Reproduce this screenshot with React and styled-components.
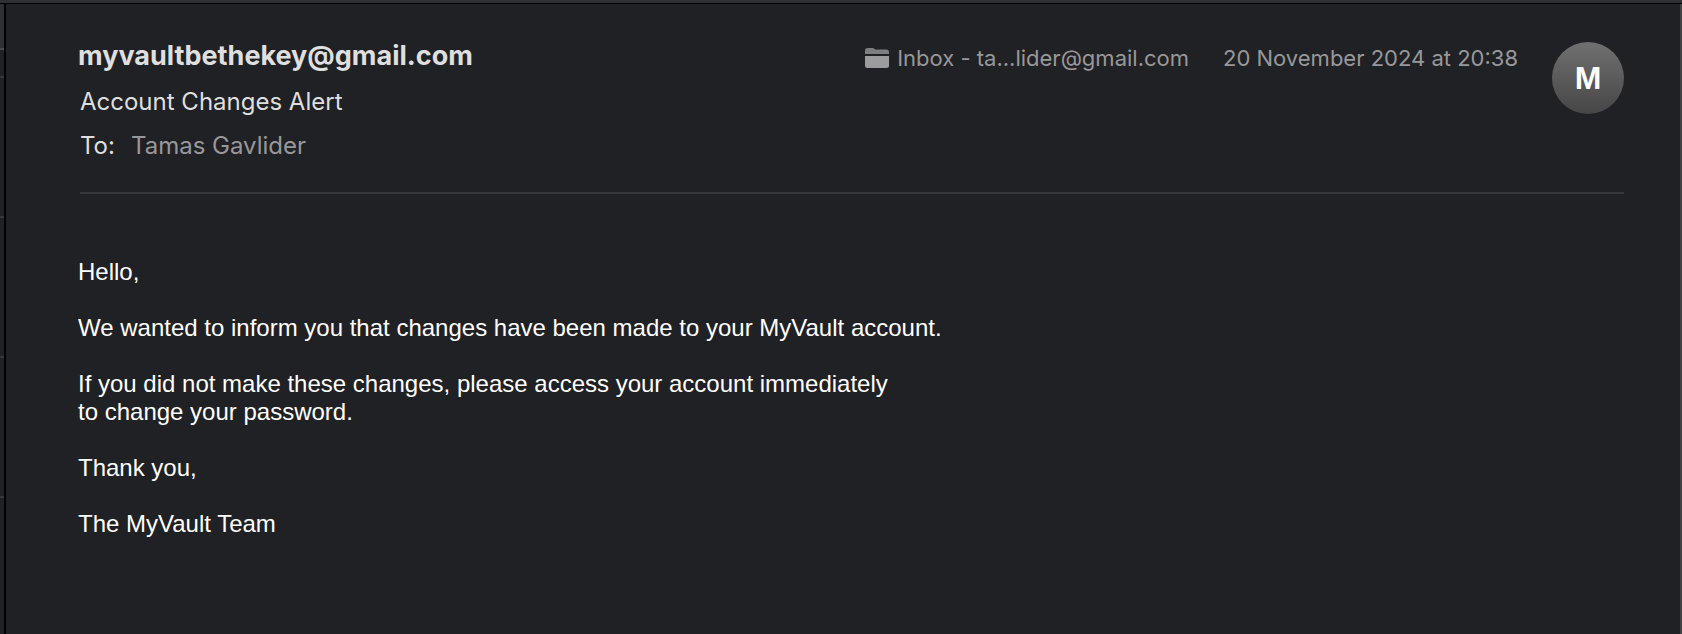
import React from "react";
import styled, { createGlobalStyle } from "styled-components";

const GlobalStyle = createGlobalStyle`
  * { box-sizing: border-box; }
  body {
    margin: 0;
    background: #202124;
    color: #dfdfdf;
    font-family: Inter, "Liberation Sans", sans-serif;
  }
  h1, h2, p { margin: 0; }
`;

const Window = styled.div`
  display: flex;
  flex-direction: column;
  min-height: 100vh;
`;

const ToolbarEdge = styled.div`
  height: 4px;
  background: #2f3033;
  border-bottom: 1px solid #000;
`;

const Panes = styled.div`
  display: flex;
  flex: 1;
`;

const ListPane = styled.aside`
  flex: none;
  width: 6px;
  border-right: 2px solid #000;
`;

const ListRow = styled.div`
  height: ${({ $height }) => $height}px;
  background: ${({ $header }) => ($header ? "#2c2f33" : "transparent")};
  border-bottom: 2px solid ${({ $header }) => ($header ? "#46484b" : "#36373a")};
`;

const Message = styled.main`
  flex: 1;
  min-width: 0;
  padding: 32px 56px 40px 72px;
  border-right: 2px solid #414244;
`;

const Header = styled.header`
  display: flex;
  align-items: flex-start;
  gap: 34px;
  margin-left: 2px;
  padding: 6px 0 30px;
  border-bottom: 2px solid #36373b;
`;

const Heading = styled.div`
  flex: 1;
  min-width: 0;
`;

const Sender = styled.h1`
  margin-left: -2px;
  font-size: 27px;
  font-weight: 700;
  line-height: 28px;
`;

const Subject = styled.h2`
  margin-top: 16px;
  font-size: 24px;
  font-weight: 400;
  line-height: 32px;
`;

const Recipient = styled.p`
  display: flex;
  gap: 16px;
  margin-top: 12px;
  font-size: 24px;
  line-height: 32px;
`;

const Muted = styled.span`
  color: #98989a;
`;

const Meta = styled.div`
  display: flex;
  align-items: center;
  color: #98989a;
  font-size: 22px;
  line-height: 32px;
  white-space: nowrap;
`;

const Mailbox = styled(Meta)`
  gap: 8px;
`;

const Avatar = styled.div`
  display: flex;
  align-items: center;
  justify-content: center;
  width: 72px;
  height: 72px;
  border-radius: 50%;
  background: linear-gradient(#707070, #464646);
  color: #fff;
`;

const Body = styled.article`
  display: flex;
  flex-direction: column;
  gap: 28px;
  padding-top: 64px;
  color: #fff;
  font-family: "Liberation Sans", Arial, sans-serif;
  font-size: 24px;
  line-height: 28px;
`;

const Initial = styled.span`
  font-family: "Liberation Sans", Arial, sans-serif;
  font-size: 32px;
  font-weight: 700;
  line-height: 36px;
`;

function FolderIcon() {
  return (
    <svg width="24" height="20" viewBox="0 0 24 20" aria-hidden="true">
      <path fill="#7f7f81" d="M0 6V2.5Q0 0 2.5 0H7.5Q8.6 0 9.4 .8L10.2 1.5H21.5Q24 1.5 24 4V6Z" />
      <path fill="#9c9c9e" d="M0 8H24V17.5Q24 20 21.5 20H2.5Q0 20 0 17.5Z" />
    </svg>
  );
}

const rows = [28, 140, 140, 140];

export default function App() {
  return (
    <Window>
      <GlobalStyle />
      <ToolbarEdge />
      <Panes>
        <ListPane>
          <ListRow $height={46} $header />
          {rows.map((height, i) => (
            <ListRow key={i} $height={height} />
          ))}
        </ListPane>
        <Message>
          <Header>
            <Heading>
              <Sender>myvaultbethekey@gmail.com</Sender>
              <Subject>Account Changes Alert</Subject>
              <Recipient>
                To: <Muted>Tamas Gavlider</Muted>
              </Recipient>
            </Heading>
            <Mailbox>
              <FolderIcon />
              Inbox - ta...lider@gmail.com
            </Mailbox>
            <Meta as="time" dateTime="2024-11-20T20:38">20 November 2024 at 20:38</Meta>
            <Avatar>
              <Initial>M</Initial>
            </Avatar>
          </Header>
          <Body>
            <p>Hello,</p>
            <p>We wanted to inform you that changes have been made to your MyVault account.</p>
            <p>
              If you did not make these changes, please access your account immediately
              <br />
              to change your password.
            </p>
            <p>Thank you,</p>
            <p>The MyVault Team</p>
          </Body>
        </Message>
      </Panes>
    </Window>
  );
}
